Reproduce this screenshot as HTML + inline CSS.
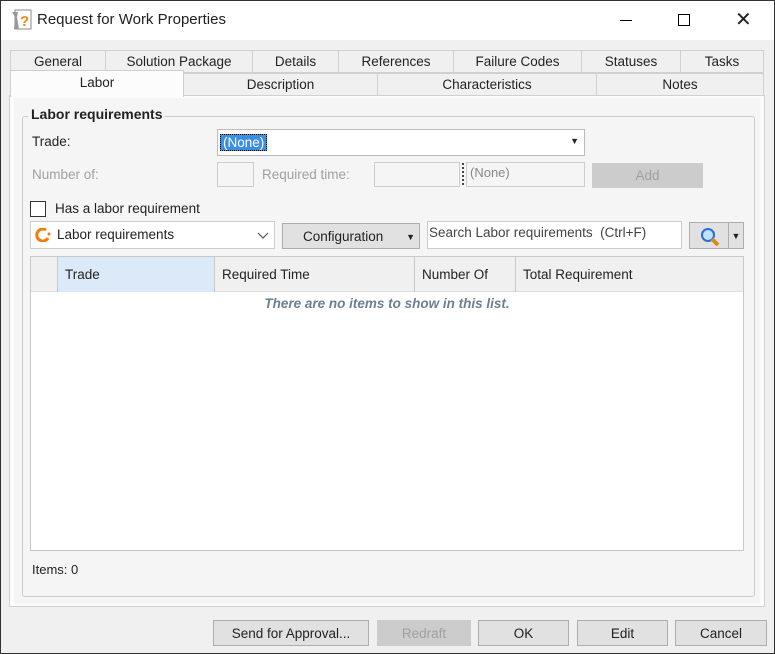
<!DOCTYPE html>
<html><head><style>
*{box-sizing:border-box;margin:0;padding:0}
body{width:775px;height:654px;overflow:hidden;font-family:"Liberation Sans",sans-serif;font-size:13px;color:#222;background:#f0f0f0}
.a{position:absolute}
.win{position:absolute;left:0;top:0;width:775px;height:654px;background:#f0f0f0}
.tb{position:absolute;left:0;top:0;width:775px;height:40px;background:#fff}
.tab{position:absolute;height:23px;border:1px solid #d0d0d0;background:#f0f0f0;text-align:center;line-height:22px;font-size:13.5px}
.box{position:absolute;background:#fff;border:1px solid #bbb}
.btn{position:absolute;background:#e1e1e1;border:1px solid #adadad;text-align:center;font-size:13.5px}
.g{color:#a0a0a0}
.col{position:absolute;top:0;height:35px;border-right:1px solid #c8c8c8;line-height:35px;padding-left:7px;font-size:13.5px}
</style></head><body><div class="win">
<div class="tb">
 <svg class="a" style="left:11px;top:9px" width="22" height="22" viewBox="0 0 22 22"><rect x="4" y="1" width="16" height="19" fill="#fff" stroke="#888"/><path d="M1 3 L7 3 L6 8 L8 20 L3 20 L4 8 Z" fill="#999"/><text x="9" y="17" font-size="15" font-weight="bold" fill="#f08a1c" font-family="Liberation Sans">?</text></svg>
 <div class="a" style="left:37px;top:11px;font-size:15px">Request for Work Properties</div>
 <div class="a" style="left:620px;top:20px;width:12px;height:1px;background:#000"></div>
 <div class="a" style="left:678px;top:14px;width:12px;height:12px;border:1px solid #000"></div>
 <div class="a" style="left:735px;top:9px;font-size:20px;line-height:22px">✕</div>
</div>
<div class="tab" style="left:10px;top:50px;width:96px">General</div>
<div class="tab" style="left:105px;top:50px;width:148px">Solution Package</div>
<div class="tab" style="left:252px;top:50px;width:87px">Details</div>
<div class="tab" style="left:338px;top:50px;width:116px">References</div>
<div class="tab" style="left:453px;top:50px;width:129px">Failure Codes</div>
<div class="tab" style="left:581px;top:50px;width:100px">Statuses</div>
<div class="tab" style="left:680px;top:50px;width:84px">Tasks</div>
<div class="a" style="left:9px;top:95px;width:756px;height:512px;border:1px solid #d0d0d0;background:#fcfcfc"></div>
<div class="a" style="left:14px;top:98px;width:746px;height:506px;background:#f5f5f5"></div>
<div class="tab" style="left:183px;top:73px;width:195px">Description</div>
<div class="tab" style="left:377px;top:73px;width:220px">Characteristics</div>
<div class="tab" style="left:596px;top:73px;width:168px">Notes</div>
<div class="tab" style="left:10px;top:70px;width:174px;height:27px;background:#fcfcfc;border-bottom:none;line-height:24px">Labor</div>
<div class="a" style="left:22px;top:116px;width:733px;height:481px;border:1px solid #ccc;border-radius:3px"></div>
<div class="a" style="left:28px;top:106px;background:#f5f5f5;padding:0 3px;font-weight:bold;font-size:14px">Labor requirements</div>
<div class="a" style="left:32px;top:134px;font-size:13.5px">Trade:</div>
<div class="box" style="left:217px;top:129px;width:368px;height:27px"><span class="a" style="left:2px;top:4px;background:#3a8ee6;color:#fff;padding:0 2px;border:1px dotted #000;font-size:13.5px">(None)</span><span class="a" style="right:5px;top:6px;font-size:9px">▼</span></div>
<div class="a g" style="left:32px;top:167px;font-size:13.5px">Number of:</div>
<div class="box" style="left:217px;top:162px;width:37px;height:25px;background:#f5f5f5;border-color:#ccc"></div>
<div class="a g" style="left:262px;top:167px;font-size:13.5px">Required time:</div>
<div class="box" style="left:374px;top:162px;width:86px;height:25px;background:#f5f5f5;border-color:#ccc"></div>
<div class="a" style="left:462px;top:163px;width:2px;height:22px;border-left:2px dotted #444"></div>
<div class="box" style="left:466px;top:162px;width:119px;height:25px;background:#f5f5f5;border-color:#ccc;padding:2px 3px;color:#888">(None)</div>
<div class="btn g" style="left:592px;top:163px;width:111px;height:25px;line-height:24px;background:#ccc;border-color:#ccc">Add</div>
<div class="a" style="left:30px;top:201px;width:16px;height:16px;border:1px solid #333;background:#fff"></div>
<div class="a" style="left:55px;top:201px;font-size:13.5px">Has a labor requirement</div>
<div class="box" style="left:30px;top:221px;width:245px;height:28px;border-color:#ccc">
 <svg class="a" style="left:3px;top:6px" width="18" height="14" viewBox="0 0 18 14"><path d="M12 2 A6 6 0 1 0 14 10" fill="none" stroke="#f07d0e" stroke-width="3"/><circle cx="15" cy="6" r="1.5" fill="#f07d0e"/></svg>
 <span class="a" style="left:26px;top:5px;font-size:13.5px">Labor requirements</span>
 <svg class="a" style="left:226px;top:10px" width="12" height="8"><path d="M1 1 L6 6 L11 1" fill="none" stroke="#555" stroke-width="1.2"/></svg></div>
<div class="btn" style="left:282px;top:223px;width:138px;height:26px;line-height:26px;text-align:left;padding-left:20px">Configuration<span class="a" style="right:4px;top:0;font-size:9px">▼</span></div>
<div class="box" style="left:427px;top:221px;width:255px;height:28px;border-color:#ccc;padding:3px 1px;font-size:13.5px;color:#444">Search Labor requirements&nbsp; (Ctrl+F)</div>
<div class="btn" style="left:689px;top:222px;width:40px;height:27px"><svg class="a" style="left:9px;top:3px" width="22" height="21"><circle cx="9" cy="9" r="6" fill="#bfe0ff" stroke="#2a6ed1" stroke-width="2"/><path d="M13 13 L19 19" stroke="#d98a17" stroke-width="4"/></svg></div>
<div class="btn" style="left:728px;top:222px;width:16px;height:27px;font-size:9px;line-height:26px">▼</div>
<div class="a" style="left:30px;top:256px;width:714px;height:295px;border:1px solid #c8c8c8;background:#fff">
 <div class="a" style="left:0;top:0;width:712px;height:35px;background:#f0f0f0;border-bottom:1px solid #ddd"></div>
 <div class="col" style="left:0;width:27px"></div>
 <div class="col" style="left:27px;width:157px;background:#dce9f9">Trade</div>
 <div class="col" style="left:184px;width:200px">Required Time</div>
 <div class="col" style="left:384px;width:101px">Number Of</div>
 <div class="col" style="left:485px;width:227px;border:none">Total Requirement</div>
 <div class="a" style="left:0;top:39px;width:712px;text-align:center;font-style:italic;font-weight:bold;color:#6d7f90;font-size:13.5px">There are no items to show in this list.</div>
</div>
<div class="a" style="left:32px;top:562px;font-size:13px">Items: 0</div>
<div class="btn" style="left:213px;top:620px;width:156px;height:26px;line-height:25px">Send for Approval...</div>
<div class="btn g" style="left:377px;top:620px;width:94px;height:26px;line-height:25px;background:#ccc;border-color:#ccc">Redraft</div>
<div class="btn" style="left:478px;top:620px;width:91px;height:26px;line-height:25px">OK</div>
<div class="btn" style="left:577px;top:620px;width:91px;height:26px;line-height:25px">Edit</div>
<div class="btn" style="left:675px;top:620px;width:92px;height:26px;line-height:25px">Cancel</div>
<div class="a" style="left:0;top:0;width:775px;height:654px;border:1px solid #333"></div>
</div></body></html>
